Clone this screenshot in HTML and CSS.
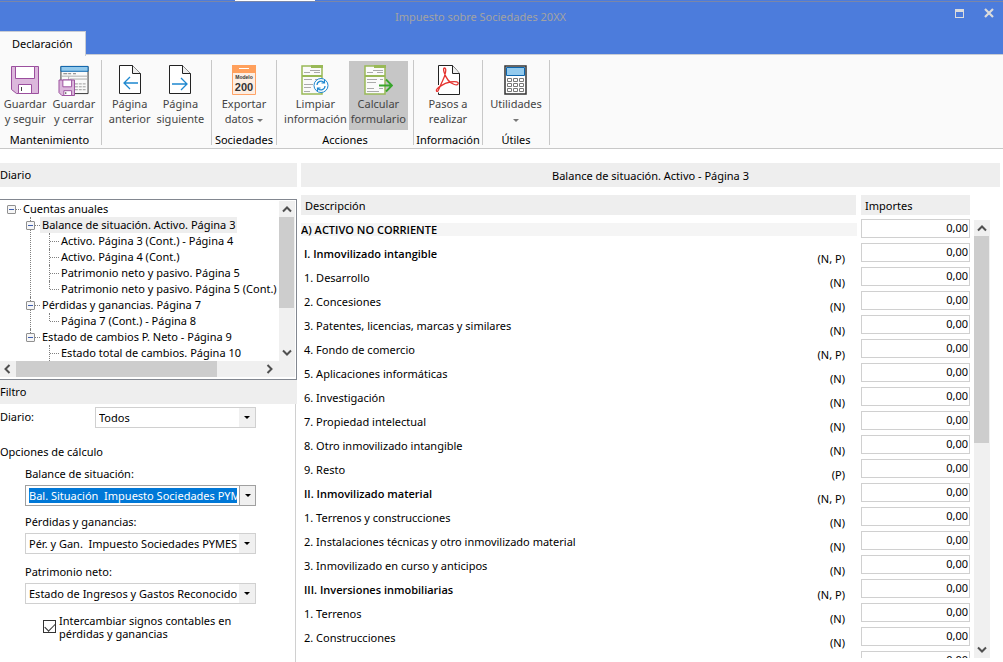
FILE: index.html
```html
<!DOCTYPE html>
<html lang="es">
<head>
<meta charset="utf-8">
<title>Impuesto sobre Sociedades 20XX</title>
<link rel="stylesheet" href="styles.css">
</head>
<body>
<div class="window">
  <header class="titlebar">
    <div class="caption">
      <h1 class="caption-text">Impuesto sobre Sociedades 20XX</h1>
      <div class="caption-buttons">
        <button class="caption-button" aria-label="Maximizar"><svg width="9" height="9" viewBox="0 0 9 9" shape-rendering="crispEdges"><path d="M.5 1.500h8v7h-8z" fill="none" stroke="#dcdcdc"/><path d="M0 0h9v3H0z" fill="#dcdcdc"/></svg></button>
        <button class="caption-button" aria-label="Cerrar"><svg width="10" height="10" viewBox="0 0 10 10"><path d="M1 1l8 8M9 1L1 9" stroke="#dcdcdc" stroke-width="2.200"/></svg></button>
      </div>
    </div>
    <div class="tabs"><button class="tab">Declaración</button></div>
  </header>

  <nav class="ribbon">
    <section class="group group-save">
      <div class="tools">
        <button class="tool">
          <svg width="30" height="30" viewBox="0 0 30 30"><path d="M1.500 1.500h27v27h-22l-5-4z" fill="#dcb8dc" stroke="#9b4f9e"/><path d="M5.500 1.500h19v12h-19z" fill="#fff" stroke="#9b4f9e"/><path d="M8.500 19.500h13v9h-13z" fill="#fff" stroke="#9b4f9e"/><path d="M11.500 22v4" stroke="#444"/></svg>
          <span>Guardar<br>y seguir</span>
        </button>
        <button class="tool">
          <svg width="32" height="32" viewBox="0 0 32 32"><path d="M2.500 1.500h28v28h-28z" fill="#fafafa" stroke="#333"/><path d="M2.500 1.500h28v5h-28z" fill="#93caed" stroke="#0d66ae"/><path d="M5 9h4m1 0h3m2 0h3" stroke="#777"/><path d="M3 11.500h27M10.500 12v4M12 14.500h18" stroke="#aaa"/><path d="M17 19.500h11M17 22.500h11M17 25.500h11" stroke="#999" stroke-dasharray="3 1"/><path d="M.5 15.500h16v16h-13l-3-3z" fill="#dcb8dc" stroke="#9b4f9e"/><path d="M4.500 15.500h9v7h-9zM5.500 26.500h8v5h-8z" fill="#fff" stroke="#9b4f9e"/><path d="M7.500 28v2" stroke="#444"/></svg>
          <span>Guardar<br>y cerrar</span>
        </button>
      </div>
      <h2 class="group-name">Mantenimiento</h2>
    </section>
    <section class="group group-pages">
      <div class="tools">
        <button class="tool">
          <svg width="24" height="30" viewBox="0 0 24 30"><path d="M1.500.5h13l8 8v20h-21z" fill="#fff" stroke="#222"/><path d="M14.500.5v8h8" fill="#eee" stroke="#222"/><path d="M20 18H6m6-6l-6 6 6 6" fill="none" stroke="#1e88d0" stroke-width="1.300"/></svg>
          <span>Página<br>anterior</span>
        </button>
        <button class="tool">
          <svg width="24" height="30" viewBox="0 0 24 30"><path d="M1.500.5h13l8 8v20h-21z" fill="#fff" stroke="#222"/><path d="M14.500.5v8h8" fill="#eee" stroke="#222"/><path d="M4 19h15m-6-6l6 6-6 6" fill="none" stroke="#1e88d0" stroke-width="1.300"/></svg>
          <span>Página<br>siguiente</span>
        </button>
      </div>
    </section>
    <section class="group group-export">
      <div class="tools">
        <button class="tool">
          <svg width="24" height="30" viewBox="0 0 24 30"><path d="M.5.5h23v29H.5z" fill="#fdeee3" stroke="#ffa366"/><path d="M0 0h24v8H0z" fill="#ffa05c"/><path d="M7 3.500h10" stroke="#fff"/><text x="12" y="14" class="model-word">Modelo</text><text x="12" y="26" class="model-number">200</text></svg>
          <span>Exportar<br>datos <i class="drop"></i></span>
        </button>
      </div>
      <h2 class="group-name">Sociedades</h2>
    </section>
    <section class="group group-actions">
      <div class="tools">
        <button class="tool">
          <svg width="28" height="30" viewBox="0 0 28 30"><path d="M1 1h20v28H1z" fill="#fafafa" stroke="#99b957" stroke-width="1.500"/><path d="M10 0h12v3H10zM1 10h20v2H1z" fill="#99b957"/><path d="M9 5.500h10M3 7.500h6m4 0h6M3 14.500h8m3 0h5M3 19.500h9M3 22.500h7M3 26.500h6" stroke="#aaa"/><circle cx="20" cy="20.500" r="7" fill="#fff" stroke="#1e88d0"/><path d="M16 20a4 4 0 0 1 7-2.500m.5-2.500v3h-3M24 21a4 4 0 0 1-7 2.500m-.5 2.500v-3h3" fill="none" stroke="#1e88d0" stroke-width="1.200"/></svg>
          <span>Limpiar<br>información</span>
        </button>
        <button class="tool tool-active">
          <svg width="30" height="30" viewBox="0 0 30 30"><path d="M2 1h20v28H2z" fill="#fafafa" stroke="#99b957" stroke-width="1.500"/><path d="M11 0h12v3H11zM2 10h20v2H2z" fill="#99b957"/><path d="M10 5.500h10M4 7.500h6m4 0h6M4 14.500h10m3 0h3M4 17.500h9M4 23.500h7m5 0h4M4 26.500h12" stroke="#aaa"/><path d="M16 20.500h13m-6-6l6 6-6 6" fill="none" stroke="#38a52b" stroke-width="1.800"/></svg>
          <span>Calcular<br>formulario</span>
        </button>
      </div>
      <h2 class="group-name">Acciones</h2>
    </section>
    <section class="group group-info">
      <div class="tools">
        <button class="tool">
          <svg width="26" height="30" viewBox="0 0 26 30"><path d="M3.500.5h14l7 8v21h-21z" fill="#fff"/><path d="M3.500 20V.5h14l7 8v21h-21v-2" fill="none" stroke="#222"/><path d="M17.500.5v8h7" fill="#eee" stroke="#222"/><path d="M9.500 3c2.500 0 1 7-2 13S3 28 1.500 26 9 18 15 17s9 0 8 2-7 0-10-4S7 3 9.500 3z" fill="none" stroke="#e5332f" stroke-width="1.300"/></svg>
          <span>Pasos a<br>realizar</span>
        </button>
      </div>
      <h2 class="group-name">Información</h2>
    </section>
    <section class="group group-utils">
      <div class="tools">
        <button class="tool">
          <svg width="24" height="30" viewBox="0 0 24 30"><path d="M1 1h21v28H1z" fill="#fff" stroke="#333" stroke-width="1.500"/><path d="M2.500 2.500h18v8h-18z" fill="#93caed" stroke="#0d66ae"/><path d="M3.500 13.500h4v3h-4zM9.500 13.500h4v3h-4zM15.500 13.500h4v3h-4zM3.500 18.500h4v3h-4zM9.500 18.500h4v3h-4zM15.500 18.500h4v3h-4zM3.500 23.500h4v3h-4zM9.500 23.500h4v3h-4zM15.500 23.500h4v3h-4z" fill="none" stroke="#777"/></svg>
          <span>Utilidades<br><i class="drop"></i></span>
        </button>
      </div>
      <h2 class="group-name">Útiles</h2>
    </section>
  </nav>

  <main class="workspace">
    <aside class="sidebar">
      <h2 class="bar">Diario</h2>
      <div class="tree-box">
        <ul class="tree">
          <li><div class="node"><button class="toggle" aria-label="Contraer"></button><span class="node-text">Cuentas anuales</span></div>
            <ul>
              <li><div class="node"><button class="toggle" aria-label="Contraer"></button><span class="node-text selected">Balance de situación. Activo. Página 3</span></div>
                <ul>
                  <li><div class="node leaf"><span class="node-text">Activo. Página 3 (Cont.) - Página 4</span></div></li>
                  <li><div class="node leaf"><span class="node-text">Activo. Página 4 (Cont.)</span></div></li>
                  <li><div class="node leaf"><span class="node-text">Patrimonio neto y pasivo. Página 5</span></div></li>
                  <li><div class="node leaf"><span class="node-text">Patrimonio neto y pasivo. Página 5 (Cont.)</span></div></li>
                </ul>
              </li>
              <li><div class="node"><button class="toggle" aria-label="Contraer"></button><span class="node-text">Pérdidas y ganancias. Página 7</span></div>
                <ul>
                  <li><div class="node leaf"><span class="node-text">Página 7 (Cont.) - Página 8</span></div></li>
                </ul>
              </li>
              <li><div class="node"><button class="toggle" aria-label="Contraer"></button><span class="node-text">Estado de cambios P. Neto - Página 9</span></div>
                <ul>
                  <li class="continues"><div class="node leaf"><span class="node-text">Estado total de cambios. Página 10</span></div></li>
                </ul>
              </li>
            </ul>
          </li>
        </ul>
        <div class="scroll-v">
          <svg class="arrow" viewBox="0 0 16 16"><path d="M4 10.500l4-4 4 4" /></svg>
          <div class="thumb tree-thumb"></div>
          <svg class="arrow arrow-end" viewBox="0 0 16 16"><path d="M4 5.500l4 4 4-4" /></svg>
        </div>
        <div class="scroll-h">
          <svg class="arrow" viewBox="0 0 16 16"><path d="M9.500 4l-4 4 4 4" /></svg>
          <div class="thumb-h"></div>
          <svg class="arrow" viewBox="0 0 16 16"><path d="M6.500 4l4 4-4 4" /></svg>
        </div>
      </div>
      <h2 class="bar">Filtro</h2>
      <form class="filter">
        <div class="filter-row">
          <label for="diario">Diario:</label>
          <span class="combo"><select id="diario"><option>Todos</option></select><i class="combo-arrow"></i></span>
        </div>
        <h3 class="options-title">Opciones de cálculo</h3>
        <div class="options">
          <div class="field">
            <label for="balance">Balance de situación:</label>
            <span class="combo combo-focus"><select id="balance"><option>Bal. Situación&nbsp; Impuesto Sociedades PYMES</option></select><i class="combo-arrow"></i></span>
          </div>
          <div class="field">
            <label for="perdidas">Pérdidas y ganancias:</label>
            <span class="combo"><select id="perdidas"><option>Pér. y Gan.&nbsp; Impuesto Sociedades PYMES</option></select><i class="combo-arrow"></i></span>
          </div>
          <div class="field field-net">
            <label for="patrimonio">Patrimonio neto:</label>
            <span class="combo"><select id="patrimonio"><option>Estado de Ingresos y Gastos Reconocidos</option></select><i class="combo-arrow"></i></span>
          </div>
          <div class="check">
            <input type="checkbox" id="signos" checked>
            <label for="signos">Intercambiar signos contables en<br>pérdidas y ganancias</label>
          </div>
        </div>
      </form>
    </aside>

    <section class="content">
      <h2 class="bar content-title">Balance de situación. Activo - Página 3</h2>
      <div class="sheet">
        <div class="sheet-view">
          <table class="accounts">
            <thead><tr><th class="col-desc" scope="col"><div class="head">Descripción</div></th><th class="col-amount" scope="col"><div class="head">Importes</div></th></tr></thead>
            <tbody id="rows"></tbody>
          </table>
        </div>
        <div class="scroll-v sheet-scroll">
          <svg class="arrow" viewBox="0 0 16 16"><path d="M4 10.500l4-4 4 4" /></svg>
          <div class="thumb sheet-thumb"></div>
          <svg class="arrow arrow-end" viewBox="0 0 16 16"><path d="M4 5.500l4 4 4-4" /></svg>
        </div>
      </div>
    </section>
  </main>
</div>
<script src="rows.js"></script>
</body>
</html>
```

FILE: rows.js
```js
const rows = [
  ["A) ACTIVO NO CORRIENTE", "", "title"],
  ["I. Inmovilizado intangible", "(N, P)", "section"],
  ["1. Desarrollo", "(N)", ""],
  ["2. Concesiones", "(N)", ""],
  ["3. Patentes, licencias, marcas y similares", "(N)", ""],
  ["4. Fondo de comercio", "(N, P)", ""],
  ["5. Aplicaciones informáticas", "(N)", ""],
  ["6. Investigación", "(N)", ""],
  ["7. Propiedad intelectual", "(N)", ""],
  ["8. Otro inmovilizado intangible", "(N)", ""],
  ["9. Resto", "(P)", ""],
  ["II. Inmovilizado material", "(N, P)", "section"],
  ["1. Terrenos y construcciones", "(N)", ""],
  ["2. Instalaciones técnicas y otro inmovilizado material", "(N)", ""],
  ["3. Inmovilizado en curso y anticipos", "(N)", ""],
  ["III. Inversiones inmobiliarias", "(N, P)", "section"],
  ["1. Terrenos", "(N)", ""],
  ["2. Construcciones", "(N)", ""],
  ["", "", ""]
];

document.getElementById("rows").innerHTML = rows.map(([text, note, kind]) => `
  <tr class="${kind}">
    <td><div class="desc"><span class="desc-text">${text}</span><span class="note">${note}</span></div></td>
    <td><input class="amount" type="text" value="0,00" aria-label="Importe ${text}"></td>
  </tr>`).join("");
```

FILE: styles.css
```css
* { box-sizing: border-box; }
body {
  margin: 0;
  background: #fff;
  color: #000;
  font: 11px/16px "Noto Sans", "Open Sans", sans-serif;
}
h1, h2, h3 { margin: 0; font-size: inherit; font-weight: normal; }
button, select, input { font: inherit; color: inherit; }
button { padding: 0; border: 0; background: none; }
ul { margin: 0; padding: 0; list-style: none; }

.window { height: 100vh; display: flex; flex-direction: column; overflow: hidden; }

/* Title bar */
.titlebar {
  position: relative;
  background: #4c7cdc;
  border-bottom: 1px solid #c8ccd4;
}
.titlebar::before {
  content: "";
  position: absolute;
  inset: 0 0 auto;
  height: 2px;
  background: linear-gradient(#4c7cdc 50%, #7a86a8 50%);
}
.titlebar::after {
  content: "";
  position: absolute;
  top: 0;
  left: 235px;
  width: 80px;
  height: 1px;
  background: #fff;
}
.caption { display: grid; grid-template-columns: 1fr auto; height: 31px; }
.caption-text {
  grid-area: 1 / 1 / 2 / 3;
  padding: 9px 42px 0 0;
  text-align: center;
  color: #a3a3a3;
}
.caption-buttons { grid-area: 1 / 2; display: flex; gap: 16px; padding: 3px 7px 0 0; }
.caption-button { display: grid; place-items: center; width: 14px; height: 20px; }
.tabs { height: 24px; margin-bottom: -1px; position: relative; }
.tab {
  height: 25px;
  padding: 0 12px;
  background: #fafafa;
  border: 1px solid #c8ccd4;
  border-width: 1px 1px 0 0;
}

/* Ribbon */
.ribbon {
  display: flex;
  padding: 5px 0 3px;
  background: #fafafa;
  border-bottom: 1px solid #c8c8c8;
}
.group {
  display: flex;
  flex-direction: column;
  align-items: center;
  height: 85px;
  border-right: 1px solid #c8c8c8;
}
.group-save { width: 102px; padding-right: 2px; }
.group-pages { width: 110px; }
.group-export { width: 65px; }
.group-actions { width: 137px; }
.group-info { width: 69px; }
.group-utils { width: 67px; }
.tools { flex: none; display: flex; height: 72px; }
.tool {
  display: flex;
  flex-direction: column;
  align-items: center;
  justify-content: space-between;
  height: 69px;
  margin-top: 1px;
  padding: 4px 2px;
  line-height: 15px;
  color: #444;
}
.group-save .tool, .group-pages .tool { padding-left: 3px; padding-right: 3px; }
.tool-active { background: #c6c6c6; }
.group-name { line-height: 16px; white-space: nowrap; }
.drop {
  display: inline-block;
  margin-left: 1px;
  border: 3px solid transparent;
  border-top-color: #777;
  border-bottom: 0;
  vertical-align: middle;
}
.model-word { font: bold 5px "Liberation Sans", sans-serif; text-anchor: middle; fill: #333; }
.model-number { font: bold 11px "Liberation Sans", sans-serif; text-anchor: middle; fill: #333; }

/* Workspace */
.workspace { flex: 1; min-height: 0; display: flex; padding-top: 14px; gap: 4px; }
.sidebar { flex: 0 0 297px; display: flex; flex-direction: column; }
.bar { flex: none; height: 24px; line-height: 24px; background: #eee; }

.tree-box {
  flex: none;
  display: grid;
  grid-template: 160px 16px / 1fr 16px;
  height: 181px;
  margin-top: 12px;
  padding: 1px 1px 2px 0;
  border: 1px solid #828790;
  border-left: 0;
}
.tree { overflow: hidden; padding-left: 7px; white-space: nowrap; }
.tree ul { padding-left: 19px; }
.tree li { position: relative; }
.tree ul > li::before {
  content: "";
  position: absolute;
  left: 4px;
  top: 0;
  bottom: 0;
  border-left: 1px dotted #808080;
}
.tree ul > li:last-child::before { bottom: auto; height: 8px; }
.tree ul > li.continues::before { height: 16px; }
.node { display: flex; align-items: center; height: 16px; }
.node::before { content: ""; order: 1; width: 5px; border-top: 1px dotted #808080; }
.leaf::before { order: 0; width: 9px; margin-left: 5px; }
.node-text { order: 2; padding: 0 2px; }
.selected { background: #eee; }
.toggle {
  position: relative;
  width: 9px;
  height: 9px;
  border: 1px solid #909090;
  border-radius: 1px;
  background: linear-gradient(#3f5fb0, #3f5fb0) center / 5px 1px no-repeat #f6f6f6;
}

.scroll-v { display: flex; flex-direction: column; background: #f0f0f0; }
.scroll-h { display: flex; grid-column: 1 / 3; background: #f0f0f0; padding-right: 18px; }
.arrow { flex: none; width: 16px; height: 16px; fill: none; stroke: #505050; stroke-width: 2; }
.arrow-end { margin-top: auto; }
.thumb { width: 15px; background: #cdcdcd; }
.tree-thumb { height: 91px; }
.thumb-h { width: 201px; margin-right: auto; background: #cdcdcd; }
.sheet-thumb { height: 207px; }

/* Filter */
.filter {
  flex: 1;
  min-height: 0;
  margin-right: 1px;
  padding-top: 3px;
  border-right: 1px solid #d0d0d0;
}
.filter-row { display: grid; grid-template-columns: 95px 161px; }
.combo { position: relative; display: block; height: 21px; }
.combo select {
  display: block;
  width: 100%;
  height: 21px;
  padding: 2px 18px 2px 3px;
  appearance: none;
  border: 1px solid #d0d0d0;
  border-radius: 0;
  background: #fff;
  outline: 0;
}
.combo-arrow {
  position: absolute;
  inset: 1px 1px 1px auto;
  width: 16px;
  background: #f0f0f0;
  pointer-events: none;
}
.combo-arrow::after {
  content: "";
  position: absolute;
  left: 5px;
  top: 8px;
  border: 3px solid transparent;
  border-top-color: #000;
  border-bottom: 0;
}
.combo-focus select {
  border-color: #a0a0a0;
  color: #fff;
  background: #0078d7 content-box;
}
.combo-focus .combo-arrow { border-left: 1px solid #a0a0a0; }
.filter-row label { padding-top: 2px; }
.options-title { margin-top: 16px; }
.options { width: 256px; padding: 6px 0 0 25px; }
.field { display: flex; flex-direction: column; gap: 3px; margin-bottom: 8px; }
.field-net { margin-top: 10px; }
.check { display: flex; gap: 3px; margin-top: 10px; padding-left: 18px; line-height: 13px; white-space: nowrap; }
.check input {
  appearance: none;
  width: 13px;
  height: 13px;
  margin: 6px 0 0;
  border: 1px solid #333;
  display: grid;
  place-items: center;
}
.check input:checked::before {
  content: "";
  width: 9px;
  height: 5px;
  border: solid #333;
  border-width: 0 0 1px 1px;
  rotate: -45deg;
  translate: 0 -1px;
}

/* Sheet */
.content { flex: 1; min-width: 0; display: flex; flex-direction: column; padding-bottom: 4px; }
.content-title { margin-right: 3px; text-align: center; line-height: 25px; }
.sheet { flex: 1; min-height: 0; display: flex; gap: 4px; margin-top: 8px; padding-right: 13px; }
.sheet-view { flex: 1; min-width: 0; overflow: hidden; }
.sheet-scroll { width: 16px; margin-top: 25px; }
.accounts { width: 100%; table-layout: fixed; border-collapse: collapse; }
.accounts th, .accounts td { padding: 0; vertical-align: top; text-align: left; font-weight: normal; }
.accounts th { padding-bottom: 3px; }
.accounts .col-desc { padding-right: 5px; }
.col-amount { width: 109px; }
.head { height: 20px; padding-left: 4px; line-height: 22px; background: #eee; }
.desc { display: flex; justify-content: space-between; height: 24px; padding: 4px 16px 0 3px; }
.note { padding-top: 5px; }
.section .desc-text, .title .desc-text { font-family: "Open Sans", "Noto Sans", sans-serif; font-weight: 600; }
.title .desc {
  padding-left: 0;
  margin-right: 4px;
  background: linear-gradient(#f5f5f5, #f5f5f5) 0 5px / 100% 13px no-repeat;
}
.amount {
  display: block;
  width: 100%;
  height: 19px;
  margin-top: 1px;
  padding: 0 1px 2px;
  border: 1px solid #d0d0d0;
  border-radius: 0;
  text-align: right;
}
```
